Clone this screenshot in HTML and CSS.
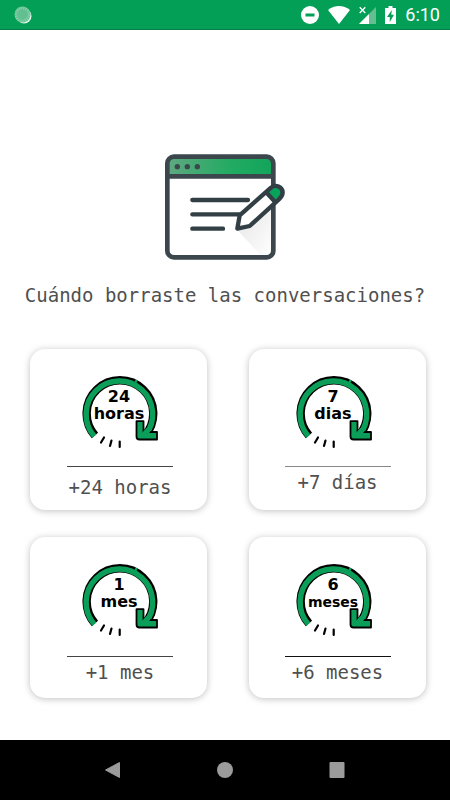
FILE: index.html
```html
<!DOCTYPE html>
<html lang="es">
<head>
  <meta charset="UTF-8">
  <meta name="viewport" content="width=device-width, initial-scale=1">
  <title>Conversaciones</title>
  <link rel="stylesheet" href="styles.css">
</head>

<body>

  <header class="status-bar">
    <svg class="spinner" width="18" height="18" viewBox="0 0 18 18">
      <circle cx="10" cy="10" r="7.5" fill="#e4f6ec"/>
      <circle cx="8.500" cy="8.500" r="8" fill="#62bf90"/>
      <circle cx="8.500" cy="8.500" r="6.500" fill="none" stroke="#8fd3b0" stroke-width="2.500" stroke-dasharray="1 1.200"/>
    </svg>
    <div class="status-icons">
      <svg width="18" height="18" viewBox="0 0 18 18">
        <circle cx="9" cy="9" r="9" fill="#fff"/>
        <rect x="4.500" y="7.500" width="9" height="3" fill="#049f57"/>
      </svg>
      <svg width="22" height="18" viewBox="0 0 22 18">
        <path d="M0 4C6.500-1.300 15.500-1.300 22 4L11 18Z" fill="#fff"/>
      </svg>
      <svg width="17" height="18" viewBox="0 0 17 18">
        <path d="M17 1V18H0Z" fill="#62bf90"/>
        <path d="M10 8V18H0Z" fill="#fff"/>
        <path d="M.7 1.200L6.300 7M6.300 1.200L.7 7" stroke="#fff" stroke-width="1.300"/>
      </svg>
      <svg width="11" height="18" viewBox="0 0 11 18">
        <path d="M3.500 0h4v2H11v16H0V2h3.500Z" fill="#fff"/>
        <path d="M6.800 4L2 11h2.800v5L9 8.800H6.300Z" fill="#049f57"/>
      </svg>
      <span class="clock">6:10</span>
    </div>
  </header>

  <main>
    <svg class="illustration" width="122" height="106" viewBox="42 40 366 318">
      <defs>
        <linearGradient id="barFill" x1="0" x2="1">
          <stop offset="0" stop-color="#5fa880"/>
          <stop offset=".6" stop-color="#22ab62"/>
          <stop offset="1" stop-color="#12a45b"/>
        </linearGradient>
        <linearGradient id="shade" x1="0" y1="0" x2="1" y2="1">
          <stop offset="0" stop-color="#d2d2d5"/>
          <stop offset="1" stop-color="#fff"/>
        </linearGradient>
      </defs>
      <rect x="52" y="48" width="318" height="302" rx="20" fill="#fff"/>
      <path d="M52 106V68q0-20 20-20h278q20 0 20 20v38Z" fill="url(#barFill)"/>
      <path d="M262 268L332 344H368V196Z" fill="url(#shade)" opacity=".6"/>
      <g fill="none" stroke="#3b474c" stroke-width="14">
        <rect x="52" y="48" width="318" height="302" rx="20"/>
        <path d="M52 107H370"/>
      </g>
      <g fill="#3b474c">
        <circle cx="82" cy="78" r="8"/>
        <circle cx="112" cy="78" r="8"/>
        <circle cx="142" cy="78" r="8"/>
      </g>
      <g fill="none" stroke="#323f45" stroke-width="13" stroke-linecap="round">
        <path d="M127 178H294M127 221H285M127 264H219"/>
      </g>
      <path d="M262 264L269 224L363 141C377 130 397 138 398 155C398 164 394 170 386 177L299 256Z" fill="#fff"/>
      <path d="M349 153L363 141C377 130 397 138 398 155C398 164 394 170 386 177L376 186Z" fill="#08a35a"/>
      <path d="M262 264L269 224L363 141C377 130 397 138 398 155C398 164 394 170 386 177L299 256ZM348 154L377 186" fill="none" stroke="#323f45" stroke-width="13" stroke-linejoin="round"/>
    </svg>

    <h1>Cuándo borraste las conversaciones?</h1>

    <!-- shared arrow drawing for the four cards -->
    <svg class="symbols" width="0" height="0">
      <symbol id="arrow" viewBox="0 0 76 76">
        <path d="M12.900 59.500A33.300 33.300 0 1 1 63 59.500" fill="none" stroke="#000" stroke-width="8.400"/>
        <path d="M12.300 60.200A33.300 33.300 0 1 1 63.500 59" fill="none" stroke="#0b9e59" stroke-width="5.500"/>
        <path d="M53 4.800l2 1" stroke="#0b9e59" stroke-width="3"/>
        <path d="M54.500 45.200h7v12.300l4-1.500h9.500v7.500H57.500q-3 0-3-3Z" fill="#0b9e59" stroke="#000" stroke-width="1.800" stroke-linejoin="round"/>
        <path d="M60.500 60.500L66.500 53.500" stroke="#0b9e59" stroke-width="5.500"/>
        <path d="M22 61.500L19 66.500M29.500 64.500L28 70M37.700 65.500V71" stroke="#000" stroke-width="2.200" stroke-linecap="round"/>
      </symbol>
    </svg>

    <div class="options">
      <button type="button" class="card">
        <svg class="card-icon" width="76" height="76" viewBox="0 0 76 76">
          <use href="#arrow"/>
          <text x="37" y="26">24</text>
          <text x="37" y="43">horas</text>
        </svg>
        <span class="line"></span>
        <span class="label">+24 horas</span>
      </button>

      <button type="button" class="card">
        <svg class="card-icon" width="76" height="76" viewBox="0 0 76 76">
          <use href="#arrow"/>
          <text x="37" y="26">7</text>
          <text x="37" y="43">dias</text>
        </svg>
        <span class="line line-light"></span>
        <span class="label">+7 días</span>
      </button>

      <button type="button" class="card">
        <svg class="card-icon" width="76" height="76" viewBox="0 0 76 76">
          <use href="#arrow"/>
          <text x="37" y="26">1</text>
          <text x="37" y="43">mes</text>
        </svg>
        <span class="line"></span>
        <span class="label">+1 mes</span>
      </button>

      <button type="button" class="card">
        <svg class="card-icon" width="76" height="76" viewBox="0 0 76 76">
          <use href="#arrow"/>
          <text x="37" y="26">6</text>
          <text class="small" x="37" y="43">meses</text>
        </svg>
        <span class="line line-dark"></span>
        <span class="label">+6 meses</span>
      </button>
    </div>
  </main>

  <nav class="nav-bar">
    <button type="button" aria-label="Atrás">
      <svg width="16" height="16" viewBox="0 0 16 16"><path d="M.5 8L14.500.5V15.500Z" fill="#9b9b9b" stroke="#9b9b9b" stroke-linejoin="round"/></svg>
    </button>
    <button type="button" aria-label="Inicio">
      <svg width="16" height="16" viewBox="0 0 16 16"><circle cx="8" cy="8" r="8" fill="#9b9b9b"/></svg>
    </button>
    <button type="button" aria-label="Recientes">
      <svg width="16" height="16" viewBox="0 0 16 16"><rect x=".5" width="15" height="16" rx="1" fill="#9b9b9b"/></svg>
    </button>
  </nav>

</body>
</html>
```
FILE: styles.css
```css
* { margin: 0; padding: 0; box-sizing: border-box; }
body { font-family: "DejaVu Sans Mono", monospace; background: #fff; color: #505050; min-height: 100vh; display: flex; flex-direction: column; }
button { border: none; background: none; font: inherit; color: inherit; cursor: pointer; }
svg { display: block; }

.status-bar { height: 30px; padding: 0 10px 0 14px; background: #049f57; border-bottom: 1px solid #058048; color: #fff; display: flex; justify-content: space-between; align-items: center; }
.status-icons { display: flex; align-items: center; gap: 9px; }
.clock { font: 400 18px/24px Roboto, sans-serif; }

main { flex: 1; display: flex; flex-direction: column; align-items: center; padding: 124px 0 42px; }
h1 { margin-top: 23px; font-size: 19px; line-height: 24px; font-weight: normal; text-align: center; }
.symbols { position: absolute; }

.options { width: 100%; margin-top: 42px; padding: 0 24px 0 30px; display: grid; grid-template-columns: 1fr 1fr; gap: 27px 42px; }
.card { height: 161px; padding-top: 27px; background: #fff; border-radius: 15px; box-shadow: 0 1px 7px rgba(0, 0, 0, 0.25); display: flex; flex-direction: column; align-items: center; }
.card:nth-child(odd) { padding-left: 3px; }
.card-icon { overflow: visible; }
.card-icon text { font: bold 16px "DejaVu Sans", sans-serif; fill: #000; text-anchor: middle; }
.card-icon .small { font-size: 14px; }
.card:nth-child(even) .card-icon { margin-right: 8px; }
.line { width: 106px; height: 1px; margin-top: 14px; background: #444; }
.line-light { background: #888; }
.line-dark { background: #111; }
.card:nth-child(n+3) .line { margin-top: 16px; }
.label { margin-top: 3px; font-size: 19px; line-height: 24px; }
.card:first-child .label { margin-top: 8px; }

.nav-bar { height: 60px; background: #000; display: flex; justify-content: center; gap: 64px; }
.nav-bar button { width: 48px; display: flex; justify-content: center; align-items: center; }
```
